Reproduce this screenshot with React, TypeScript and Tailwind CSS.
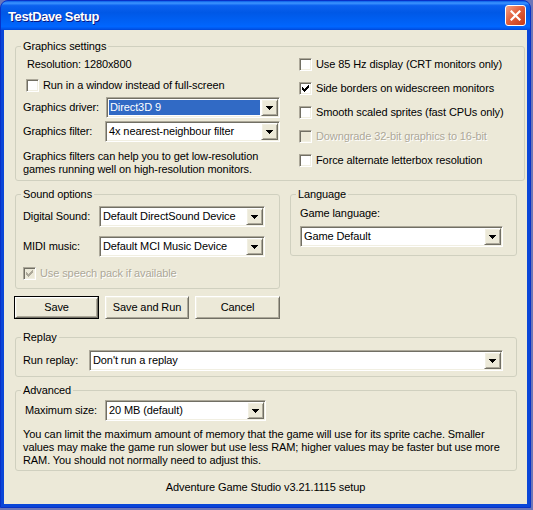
import React from 'react';

const sunken =
  'border border-t-[#ACA899] border-l-[#ACA899] border-b-white border-r-white shadow-[inset_1px_1px_0_#716F64,inset_-1px_-1px_0_#F1EFE2]';
const raised =
  'border border-t-white border-l-white border-b-[#716F64] border-r-[#716F64] shadow-[inset_1px_1px_0_#F1EFE2,inset_-1px_-1px_0_#ACA899]';

function Check({ checked = false, disabled = false }: { checked?: boolean; disabled?: boolean }) {
  return (
    <span
      className={`w-[13px] h-[13px] shrink-0 flex items-center justify-center ${sunken} ${
        disabled ? 'bg-[#ECE9D8]' : 'bg-white'
      }`}
    >
      {checked && (
        <svg width="7" height="7" viewBox="0 0 7 7" shapeRendering="crispEdges">
          <path
            fill={disabled ? '#ACA899' : '#000'}
            d="M6 0h1v1h-1z M5 1h2v1h-2z M0 2h1v1h-1z M4 2h3v1h-3z M0 3h2v1h-2z M3 3h3v1h-3z M0 4h5v1h-5z M1 5h3v1h-3z M2 6h1v1h-1z"
          />
        </svg>
      )}
    </span>
  );
}

function CheckRow({
  label,
  checked,
  disabled,
  className = '',
}: {
  label: string;
  checked?: boolean;
  disabled?: boolean;
  className?: string;
}) {
  return (
    <div className={`flex items-center gap-[4px] h-[13px] ${className}`}>
      <Check checked={checked} disabled={disabled} />
      <span className={disabled ? 'text-[#ACA899] [text-shadow:1px_1px_0_#fff]' : ''}>{label}</span>
    </div>
  );
}

function Combo({ value, w, selected = false }: { value: string; w: string; selected?: boolean }) {
  return (
    <div className={`${w} h-[21px] shrink-0 flex p-[1px] bg-white ${sunken}`}>
      <div className="flex-1 min-w-0 p-[1px] flex">
        <span
          className={`flex-1 flex items-center pl-[1px] whitespace-nowrap ${
            selected ? 'bg-[#316AC5] text-white' : ''
          }`}
        >
          {value}
        </span>
      </div>
      <div className={`w-[17px] h-full bg-[#ECE9D8] flex items-center justify-center ${raised}`}>
        <svg width="7" height="4" viewBox="0 0 7 4" shapeRendering="crispEdges">
          <path d="M0 0h7v1h-7z M1 1h5v1h-5z M2 2h3v1h-3z M3 3h1v1h-1z" fill="#000" />
        </svg>
      </div>
    </div>
  );
}

function Btn({ children, w, def = false }: { children: React.ReactNode; w: string; def?: boolean }) {
  return (
    <div className={`${w} h-[23px] ${def ? 'border border-black' : ''}`}>
      <div className={`w-full h-full flex items-center justify-center bg-[#ECE9D8] ${raised}`}>{children}</div>
    </div>
  );
}

function Group({
  title,
  className,
  children,
}: {
  title: string;
  className: string;
  children: React.ReactNode;
}) {
  return (
    <fieldset className={`border border-[#D0D0BF] rounded-[3px] shrink-0 ${className}`}>
      <legend className="ml-[5px] px-[2px] leading-[13px]">{title}</legend>
      {children}
    </fieldset>
  );
}

export default function App() {
  return (
    <div className="w-[533px] h-[510px] bg-[#6c76b8] font-['Liberation_Sans',Arial,sans-serif] text-[11px] leading-[13px] tracking-[-0.1px] text-black">
      <div className="w-[531px] h-[508px] rounded-t-[8px] bg-[#0A46D8] border border-[#0831C8] flex flex-col overflow-hidden">
        {/* title bar */}
        <div className="h-[29px] shrink-0 flex items-center justify-between bg-[linear-gradient(to_bottom,#0A5FE8_0%,#3D95FF_7%,#0B61EF_16%,#0058E6_40%,#0062F7_75%,#0066FF_88%,#005AF0_94%,#0047D8_100%)]">
          <span className="pl-[7px] pt-[1px] text-white font-bold text-[13px] tracking-[-0.4px] [text-shadow:1px_1px_0_#0A1883]">
            TestDave Setup
          </span>
          <div className="mr-[4px] w-[21px] h-[21px] rounded-[3px] border border-white flex items-center justify-center bg-[linear-gradient(135deg,#F3A287_0%,#E2613E_45%,#C63A16_100%)]">
            <svg width="11" height="11" viewBox="0 0 11 11">
              <path d="M1.5 1.5l8 8M9.5 1.5l-8 8" stroke="#fff" strokeWidth="2.2" strokeLinecap="square" />
            </svg>
          </div>
        </div>

        {/* client area */}
        <div className="mx-[3px] mb-[3px] flex-1 bg-[#ECE9D8] pt-[10px] pl-[11px] flex flex-col">
          <Group title="Graphics settings" className="w-[510px] h-[141px]">
            <div className="flex">
              <div className="w-[283px] pl-[7px] flex flex-col">
                <div className="mt-[5px] ml-[4px]">Resolution: 1280x800</div>
                <CheckRow label="Run in a window instead of full-screen" className="mt-[8px] ml-[3px]" />
                <div className="mt-[5px] flex items-center">
                  <span className="w-[83px]">Graphics driver:</span>
                  <Combo value="Direct3D 9" w="w-[174px]" selected />
                </div>
                <div className="mt-[3px] flex items-center">
                  <span className="w-[82px]">Graphics filter:</span>
                  <Combo value="4x nearest-neighbour filter" w="w-[175px]" />
                </div>
                <p className="mt-[8px]">
                  Graphics filters can help you to get low-resolution
                  <br />
                  games running well on high-resolution monitors.
                </p>
              </div>
              <div className="pt-[5px] flex flex-col gap-[11px]">
                <CheckRow label="Use 85 Hz display (CRT monitors only)" />
                <CheckRow label="Side borders on widescreen monitors" checked />
                <CheckRow label="Smooth scaled sprites (fast CPUs only)" />
                <CheckRow label="Downgrade 32-bit graphics to 16-bit" disabled />
                <CheckRow label="Force alternate letterbox resolution" />
              </div>
            </div>
          </Group>

          <div className="mt-[7px] flex items-start gap-[10px]">
            <Group title="Sound options" className="w-[265px] h-[101px]">
              <div className="pl-[7px] flex flex-col">
                <div className="mt-[5px] flex items-center">
                  <span className="w-[76px]">Digital Sound:</span>
                  <Combo value="Default DirectSound Device" w="w-[166px]" />
                </div>
                <div className="mt-[9px] flex items-center">
                  <span className="w-[76px]">MIDI music:</span>
                  <Combo value="Default MCI Music Device" w="w-[166px]" />
                </div>
                <CheckRow label="Use speech pack if available" checked disabled className="mt-[10px]" />
              </div>
            </Group>
            <Group title="Language" className="w-[227px] h-[68px]">
              <div className="pl-[9px] flex flex-col">
                <div className="mt-[6px]">Game language:</div>
                <div className="mt-[6px]">
                  <Combo value="Game Default" w="w-[203px]" />
                </div>
              </div>
            </Group>
          </div>

          <div className="mt-[7px] -ml-[1px] flex gap-[6px]">
            <Btn w="w-[85px]" def>
              Save
            </Btn>
            <Btn w="w-[84px]">Save and Run</Btn>
            <Btn w="w-[85px]">Cancel</Btn>
          </div>

          <Group title="Replay" className="mt-[12px] w-[502px] h-[46px]">
            <div className="pl-[7px] mt-[6px] flex items-center">
              <span className="w-[66px]">Run replay:</span>
              <Combo value="Don't run a replay" w="w-[414px]" />
            </div>
          </Group>

          <Group title="Advanced" className="mt-[7px] w-[502px] h-[87px]">
            <div className="pl-[9px] mt-[3px] flex items-center">
              <span className="w-[80px]">Maximum size:</span>
              <Combo value="20 MB (default)" w="w-[161px]" />
            </div>
            <p className="pl-[7px] mt-[7px]">
              You can limit the maximum amount of memory that the game will use for its sprite cache. Smaller
              <br />
              values may make the game run slower but use less RAM; higher values may be faster but use more
              <br />
              RAM. You should not normally need to adjust this.
            </p>
          </Group>

          <div className="mt-[10px] -ml-[11px] text-center">Adventure Game Studio v3.21.1115 setup</div>
        </div>
      </div>
    </div>
  );
}
